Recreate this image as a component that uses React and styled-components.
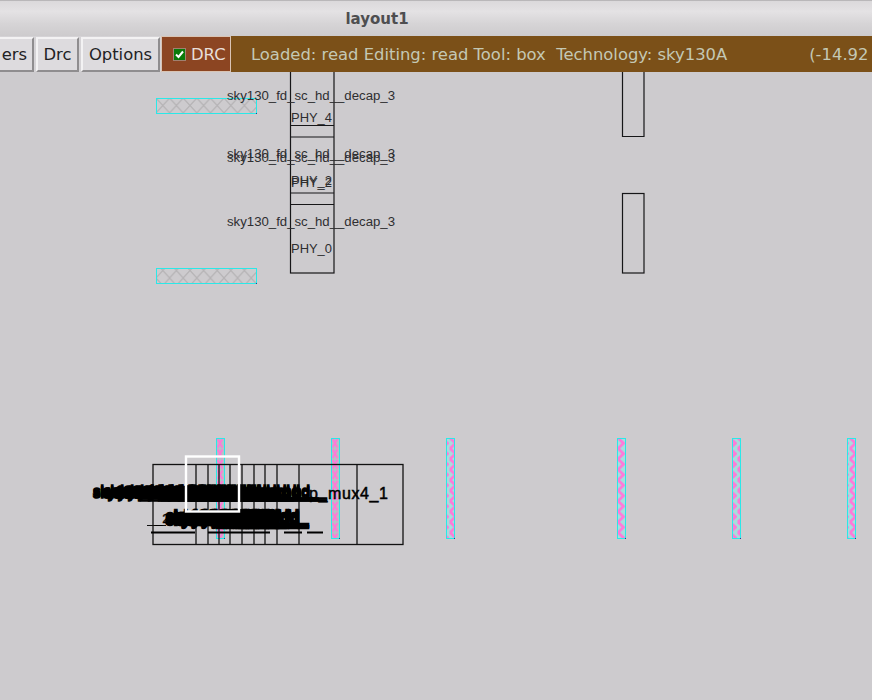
import React from "react";
import styled, { createGlobalStyle } from "styled-components";

const Global = createGlobalStyle`
  html, body { margin: 0; padding: 0; background: #cdcbce; }
  body { width: 872px; height: 700px; overflow: hidden; font-family: "DejaVu Sans", sans-serif; }
`;

const Page = styled.div`
  width: 872px;
  height: 700px;
  display: flex;
  flex-direction: column;
  overflow: hidden;
`;

const TitleBar = styled.header`
  height: 36px;
  flex: none;
  box-sizing: border-box;
  border-top: 1px solid #b9b7b9;
  background: linear-gradient(#dbd9db 0%, #e4e2e4 30%, #d6d4d6 65%, #cdcbcd 100%);
  display: flex;
  align-items: center;
  justify-content: center;
  padding: 0 118px 0 0;
`;

const Title = styled.h1`
  margin: 0;
  font: bold 15px "DejaVu Sans", sans-serif;
  color: #4e4e50;
`;

const Toolbar = styled.nav`
  height: 36px;
  flex: none;
  display: flex;
  align-items: stretch;
  background: #7b5018;
`;

const ButtonGroup = styled.div`
  flex: none;
  display: flex;
  gap: 2px;
  padding: 1px 1px 0 0;
  background: #d5d3d6;
  margin-left: ${(p) => p.$ml}px;
`;

const MenuButton = styled.button`
  flex: none;
  width: ${(p) => p.$w}px;
  padding: 0 ${(p) => p.$pr || 0}px 0 0;
  box-sizing: border-box;
  border-style: solid;
  border-width: 2px;
  border-color: #f3f2f3 #8f8d8f #8f8d8f #f3f2f3;
  background: #dddbde;
  color: #222224;
  font: 16.4px "DejaVu Sans", sans-serif;
  text-align: ${(p) => p.$align || "center"};
`;

const DrcToggle = styled.label`
  flex: none;
  width: 70px;
  box-sizing: border-box;
  background: #8c4522;
  border: 1px solid #d9c4b4;
  color: #e8ded8;
  font: 16.4px "DejaVu Sans", sans-serif;
  display: flex;
  align-items: center;
  gap: 5px;
  padding-left: 11px;
`;

const CheckBox = styled.span`
  width: 13px;
  height: 13px;
  box-sizing: border-box;
  background: #0a7a0a;
  border: 1px solid #a08070;
  display: flex;
  align-items: center;
  justify-content: center;
`;

const Status = styled.div`
  flex: 1;
  min-width: 0;
  display: flex;
  align-items: center;
  padding-left: 20px;
  color: #c4c8b4;
  font: 16.4px "DejaVu Sans", sans-serif;
  white-space: pre;
  overflow: hidden;
`;

const Coord = styled.span`
  margin-left: 82px;
  flex: none;
`;

const Canvas = styled.svg`
  display: block;
  flex: 1;
  width: 872px;
  height: 628px;
  background: #cdcbce;
`;

const Label = styled.text`
  font-family: "Liberation Sans", Arial, sans-serif;
  font-size: ${(p) => p.$size || 12}px;
  fill: ${(p) => p.$fill || "#2e2e30"};
`;

const upper = [
  { x: 227, y: 100, t: "sky130_fd_sc_hd__decap_3" },
  { x: 227, y: 158, t: "sky130_fd_sc_hd__decap_3" },
  { x: 227, y: 162, t: "sky130_fd_sc_hd__decap_3" },
  { x: 227, y: 226, t: "sky130_fd_sc_hd__decap_3" },
  { x: 291, y: 121.5, t: "PHY_4" },
  { x: 291, y: 185, t: "PHY_2" },
  { x: 291, y: 187, t: "PHY_2" },
  { x: 291, y: 252.5, t: "PHY_0" },
];

const strips = [216, 331, 446, 617, 732, 847];
const verticals = [196, 208, 219, 230, 242, 254, 265, 277, 299, 357];
const topBlob = [93, 103, 113, 123, 133, 143, 153, 163, 173, 183, 193];
const topRows = [496, 498];
const lowBlob = [166, 176, 186, 196, 206, 216, 226];
const lowRows = [522, 524, 525];
const dashes = [[151, 195], [208, 270], [284, 302], [307, 323]];

function Hatch({ x, y, w, h, fill }) {
  return (
    <g>
      <rect x={x} y={y} width={w + 1} height={h + 1} fill={fill} />
      <rect x={x + 0.5} y={y + 0.5} width={w} height={h} fill="none" stroke="#2ae8e8" strokeWidth="1" shapeRendering="crispEdges" />
      <rect x={x + w} y={y + h} width="1" height="1" fill="#2a3a90" />
    </g>
  );
}

export default function App() {
  return (
    <Page>
      <Global />
      <TitleBar>
        <Title>layout1</Title>
      </TitleBar>
      <Toolbar>
        <ButtonGroup $ml={-56}>
          <MenuButton $w={90} $align="right" $pr={5}>ers</MenuButton>
          <MenuButton $w={43}>Drc</MenuButton>
          <MenuButton $w={79}>Options</MenuButton>
        </ButtonGroup>
        <DrcToggle>
          <CheckBox>
            <svg width="9" height="9" viewBox="0 0 9 9">
              <path d="M1 4.5 L3.5 7 L8 1.5" fill="none" stroke="#fff" strokeWidth="2" />
            </svg>
          </CheckBox>
          DRC
        </DrcToggle>
        <Status>
          <span>Loaded: read Editing: read Tool: box  Technology: sky130A</span>
          <Coord>(-14.92</Coord>
        </Status>
      </Toolbar>
      <Canvas viewBox="0 72 872 628">
        <defs>
          <pattern id="grey" width="13.6" height="15" patternUnits="userSpaceOnUse" patternTransform="translate(156 98)">
            <path d="M0 0 L13.6 15 M13.6 0 L0 15" stroke="#b6b4b6" strokeWidth="1.3" />
          </pattern>
          <pattern id="pink" width="8" height="10.5" patternUnits="userSpaceOnUse" patternTransform="translate(617 438)">
            <rect width="8" height="10.5" fill="#a8dcdc" />
            <path d="M1 0 L6.5 5.25 L1 10.5" fill="none" stroke="#ff78d8" strokeWidth="2.8" />
          </pattern>
          <pattern id="pinkx" width="8" height="10.5" patternUnits="userSpaceOnUse" patternTransform="translate(216 438)">
            <rect width="8" height="10.5" fill="#b8c0c4" />
            <path d="M1.5 1 L6.5 9.5 M6.5 1 L1.5 9.5" fill="none" stroke="#ff78d8" strokeWidth="2" />
          </pattern>
          <pattern id="pinkx2" width="8" height="10.5" patternUnits="userSpaceOnUse" patternTransform="translate(331 438)">
            <rect width="8" height="10.5" fill="#b8c0c4" />
            <path d="M1.5 1 L6.5 9.5 M6.5 1 L1.5 9.5" fill="none" stroke="#ff78d8" strokeWidth="2" />
          </pattern>
        </defs>

        <g fill="none" stroke="#161618" strokeWidth="1.2">
          <rect x="290.5" y="60" width="43.5" height="213" />
          <path d="M290.5 125.5H334M290.5 137H334M290.5 193H334M290.5 204.5H334" />
          <path d="M622.5 60V136.5H644V60" />
          <rect x="622.5" y="193.5" width="21.5" height="79.5" />
        </g>

        <Hatch x={156} y={98} w={100} h={15} fill="url(#grey)" />
        <Hatch x={156} y={268} w={100} h={15} fill="url(#grey)" />

        {upper.map((l, i) => (
          <Label key={i} x={l.x} y={l.y} textLength={l.t.length > 6 ? 168 : 41} lengthAdjust="spacingAndGlyphs">
            {l.t}
          </Label>
        ))}

        {strips.map((x, i) => (
          <Hatch key={x} x={x} y={438} w={8} h={100} fill={i === 0 ? "url(#pinkx)" : i === 1 ? "url(#pinkx2)" : "url(#pink)"} />
        ))}

        <g fill="none" stroke="#111" strokeWidth="1.3">
          <rect x="153" y="464.5" width="250" height="80" />
          {verticals.map((x) => (
            <path key={x} d={`M${x} 464.5V544`} />
          ))}
        </g>

        {topRows.map((y) =>
          topBlob.map((x) => (
            <Label key={`${y}-${x}`} x={x} y={y} $size={15} $fill="#000" stroke="#000" strokeWidth="1.5">
              sky130_fd_sc_hd__
            </Label>
          ))
        )}
        <Label x={309} y={499} $size={16} $fill="#000" stroke="#000" strokeWidth="0.5" letterSpacing="0.6">
          p_mux4_1
        </Label>
        <path d="M147 525.5H166" stroke="#111" strokeWidth="1" />
        <Label x={155} y={523} $size={13} $fill="#000" stroke="#000" strokeWidth="0.4">_27</Label>
        {lowRows.map((y) =>
          lowBlob.map((x) => (
            <Label key={`${y}-${x}`} x={x} y={y} $size={16} $fill="#000" stroke="#000" strokeWidth="2.4">
              sky130_fd_
            </Label>
          ))
        )}
        <g stroke="#000" strokeWidth="2">
          {dashes.map(([a, b]) => (
            <path key={a} d={`M${a} 532.5H${b}`} />
          ))}
        </g>

        <rect x="186" y="456.5" width="53" height="55" fill="none" stroke="#fff" strokeWidth="2.4" />
      </Canvas>
    </Page>
  );
}
